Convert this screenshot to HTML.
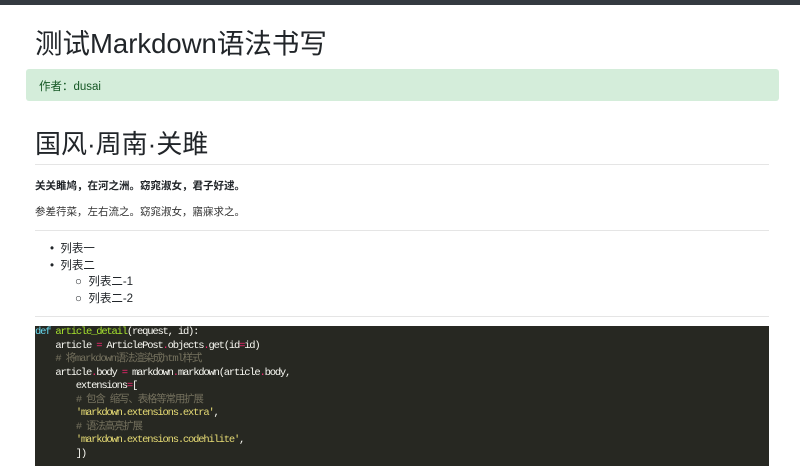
<!DOCTYPE html>
<html><head><meta charset="utf-8"><style>
body{margin:0;background:#fff;font-family:"Liberation Sans","Noto Sans CJK SC",sans-serif;color:#212529;width:800px;height:455px;overflow:hidden;position:relative}
.bar{position:absolute;left:0;top:0;width:800px;height:5px;background:#343a40}
.a{position:absolute;white-space:nowrap}
.hr{position:absolute;left:35px;width:734px;height:1px;background:#e5e5e5}
pre{position:absolute;left:35px;top:326px;width:734px;height:140px;margin:0;background:#272822;color:#f8f8f2;font-family:"Liberation Mono","Noto Sans CJK SC",monospace;font-size:10.5px;letter-spacing:-1.2px;line-height:13.5px;padding-top:0}
.k{color:#66d9ef}.f{color:#a6e22e}.c{color:#75715e}.s{color:#e6db74}.o{color:#f92672}
</style></head><body>
<div class="bar"></div>
<div class="a" style="left:35px;top:21px;font-size:27.5px;color:#212529">测试Markdown语法书写</div>
<div class="a" style="left:26px;top:69px;width:753px;height:32px;background:#d4edda;border-radius:3px"></div>
<div class="a" style="left:39px;top:78px;font-size:11.5px;color:#155724">作者：dusai</div>
<div class="a" style="left:35px;top:124px;font-size:26px">国风·周南·关雎</div>
<div class="hr" style="top:164px"></div>
<div class="a" style="left:35px;top:178px;font-size:10.5px;font-weight:bold">关关雎鸠，在河之洲。窈窕淑女，君子好逑。</div>
<div class="a" style="left:35px;top:204px;font-size:10.5px;color:#333">参差荇菜，左右流之。窈窕淑女，寤寐求之。</div>
<div class="hr" style="top:230px"></div>
<div class="a" style="left:50px;top:241px;font-size:11.5px;line-height:16.5px">• &nbsp;列表一<br>• &nbsp;列表二<br><span style="margin-left:25px">○ &nbsp;列表二-1</span><br><span style="margin-left:25px">○ &nbsp;列表二-2</span></div>
<div class="hr" style="top:316px"></div>
<pre><span class="k">def</span> <span class="f">article_detail</span>(request, id):
    article <span class="o">=</span> ArticlePost<span class="o">.</span>objects<span class="o">.</span>get(id<span class="o">=</span>id)
    <span class="c"># 将markdown语法渲染成html样式</span>
    article<span class="o">.</span>body <span class="o">=</span> markdown<span class="o">.</span>markdown(article<span class="o">.</span>body,
        extensions<span class="o">=</span>[
        <span class="c"># 包含 缩写、表格等常用扩展</span>
        <span class="s">'markdown.extensions.extra'</span>,
        <span class="c"># 语法高亮扩展</span>
        <span class="s">'markdown.extensions.codehilite'</span>,
        ])
</pre>
</body></html>
